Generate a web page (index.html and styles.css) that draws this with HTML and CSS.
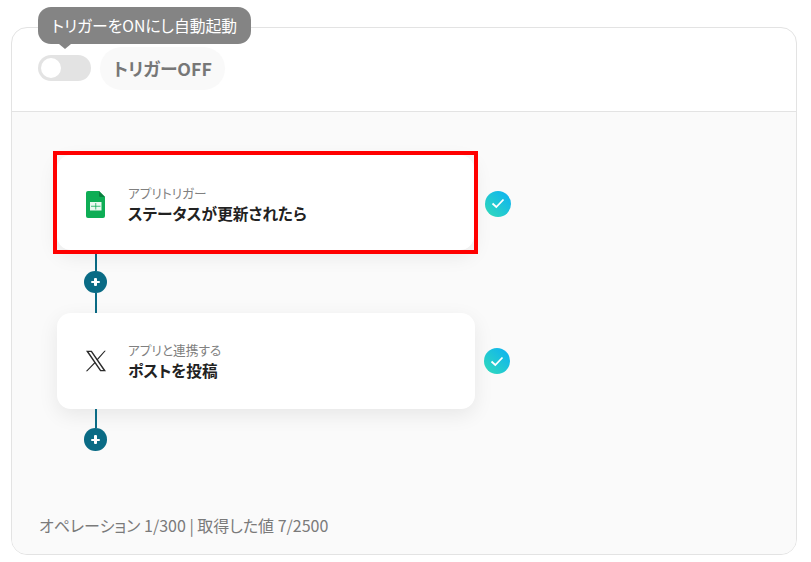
FILE: index.html
```html
<!DOCTYPE html>
<html>
<head>
  <title>flow</title>
  <meta charset="utf-8">
  <link rel="stylesheet" href="styles.css">
</head>
<body>
  <div class="panel">
    <div class="head">
      <div class="tooltip">トリガーをONにし自動起動</div>
      <div class="toggle"><span class="knob"></span></div>
      <div class="status">トリガーOFF</div>
    </div>
    <div class="body">
      <div class="step step-on">
        <div class="card card-on">
          <svg class="icon" width="19" height="27" viewBox="0 0 19 27">
            <path d="M2 0H13L19 6V25A2 2 0 0 1 17 27H2A2 2 0 0 1 0 25V2A2 2 0 0 1 2 0Z" fill="#0ead55"/>
            <path d="M13 0L19 6H14.500A1.500 1.500 0 0 1 13 4.500Z" fill="#0a7f3f"/>
            <rect x="4" y="11" width="11.500" height="8.500" fill="#e9f8ef"/>
            <path d="M9.750 12V18.500M5 15.250H14.500" fill="none" stroke="#0ead55" stroke-width=".8"/>
          </svg>
          <div class="label">
            <div class="sub">アプリトリガー</div>
            <div class="title">ステータスが更新されたら</div>
          </div>
        </div>
        <div class="check">
          <svg width="14" height="11" viewBox="0 0 14 11"><path d="M1.500 5.500L5.300 9L12.500 1.500" fill="none" stroke="#fff" stroke-width="1.800"/></svg>
        </div>
      </div>
      <div class="link">
        <span class="line"></span>
        <span class="plus"></span>
        <span class="line"></span>
      </div>
      <div class="step">
        <div class="card">
          <svg class="icon" width="22" height="22" viewBox="0 0 22 22">
            <path d="M1 .7H6.800L21 21.300H15.200ZM3.700 2L16 20H18.300L6 2Z" fill="#2b2b2b" fill-rule="evenodd"/>
            <path d="M19.400 .7H20.800L12.300 10.500L11.600 9.500ZM9.700 11.900L10.400 12.900L2.300 21.300H.8Z" fill="#2b2b2b"/>
          </svg>
          <div class="label">
            <div class="sub">アプリと連携する</div>
            <div class="title">ポストを投稿</div>
          </div>
        </div>
        <div class="check">
          <svg width="14" height="11" viewBox="0 0 14 11"><path d="M1.500 5.500L5.300 9L12.500 1.500" fill="none" stroke="#fff" stroke-width="1.800"/></svg>
        </div>
      </div>
      <div class="link link-end">
        <span class="line"></span>
        <span class="plus"></span>
      </div>
      <div class="foot">オペレーション 1/300 | 取得した値 7/2500</div>
    </div>
  </div>
</body>
</html>
```
FILE: styles.css
```css
*{
  padding:0;
  margin:0;
  box-sizing:border-box;
}
html,body{
  height:100%;
}
body{
  background:#fff;
  font-family:"Noto Sans CJK JP","Noto Sans",sans-serif;
  font-feature-settings:"palt";
  padding:27px 14px 7px 11px;
}
.panel{
  height:100%;
  border:1px solid #e3e3e3;
  border-radius:16px;
  display:flex;
  flex-direction:column;
}
.head{
  height:84px;
  flex:none;
  position:relative;
  display:flex;
  align-items:flex-start;
  gap:9px;
  padding:19px 0 0 26px;
  border-bottom:1px solid #e3e3e3;
}
.tooltip{
  position:absolute;
  left:26px;
  top:-21px;
  width:213px;
  height:37px;
  line-height:37px;
  border-radius:13px;
  background:#848484;
  color:#fff;
  font-size:15.800px;
  text-align:center;
  white-space:nowrap;
}
.tooltip:after{
  content:"";
  position:absolute;
  left:21px;
  top:37px;
  border-left:6px solid transparent;
  border-right:6px solid transparent;
  border-top:5px solid #848484;
}
.toggle{
  width:53px;
  height:26px;
  margin-top:8px;
  border-radius:13px;
  background:#e3e3e3;
  padding:3px;
}
.knob{
  display:block;
  width:20px;
  height:20px;
  border-radius:50%;
  background:#fff;
}
.status{
  width:125px;
  height:43px;
  line-height:43px;
  border-radius:22px;
  background:#f9f9f9;
  color:#777;
  font-size:17.800px;
  font-weight:700;
  text-align:center;
}
.body{
  flex:1;
  background:#fafafa;
  border-radius:0 0 15px 15px;
  padding:43px 0 0 45px;
  display:flex;
  flex-direction:column;
}
.step{
  display:flex;
  align-items:center;
}
.card{
  width:418px;
  height:96px;
  background:#fff;
  border-radius:14px;
  box-shadow:0 6px 20px rgba(0,0,0,0.08);
  display:flex;
  align-items:center;
  gap:21px;
  padding-left:28px;
}
.card-on{
  width:417px;
  height:95px;
  gap:23px;
  padding-left:29px;
  padding-top:3px;
  position:relative;
}
.card-on:after{
  content:"";
  position:absolute;
  top:-4px;
  right:-4px;
  bottom:-4px;
  left:-4px;
  border:4px solid #f00;
}
.icon{
  flex:none;
}
.sub{
  font-size:12.700px;
  line-height:18px;
  color:#808080;
}
.title{
  font-size:15.700px;
  line-height:22px;
  margin:1px 0 -1px;
  font-weight:700;
  color:#222;
}
.check{
  width:26px;
  height:26px;
  margin-left:9px;
  border-radius:50%;
  background:linear-gradient(45deg,#33dcb8,#0bb0f5);
  display:flex;
  align-items:center;
  justify-content:center;
}
.step-on .check{
  margin:2px 0 0 11px;
}
.link{
  width:23px;
  height:63px;
  padding-top:1px;
  margin-left:27px;
  display:flex;
  flex-direction:column;
  align-items:center;
}
.link-end{
  height:42px;
  padding-top:0;
}
.line{
  flex:1;
  width:2px;
  background:#0a6b85;
}
.plus{
  flex:none;
  width:22.600px;
  height:22.600px;
  border-radius:50%;
  background:#0a6b85;
  position:relative;
}
.plus:before,.plus:after{
  content:"";
  position:absolute;
  left:7px;
  top:10.200px;
  width:8.600px;
  height:2.200px;
  border-radius:1px;
  background:#fff;
}
.plus:after{
  left:10.200px;
  top:7px;
  width:2.200px;
  height:8.600px;
}
.foot{
  margin:auto 0 18px -18px;
  font-size:16px;
  line-height:22px;
  color:#7a7a7a;
}
```
